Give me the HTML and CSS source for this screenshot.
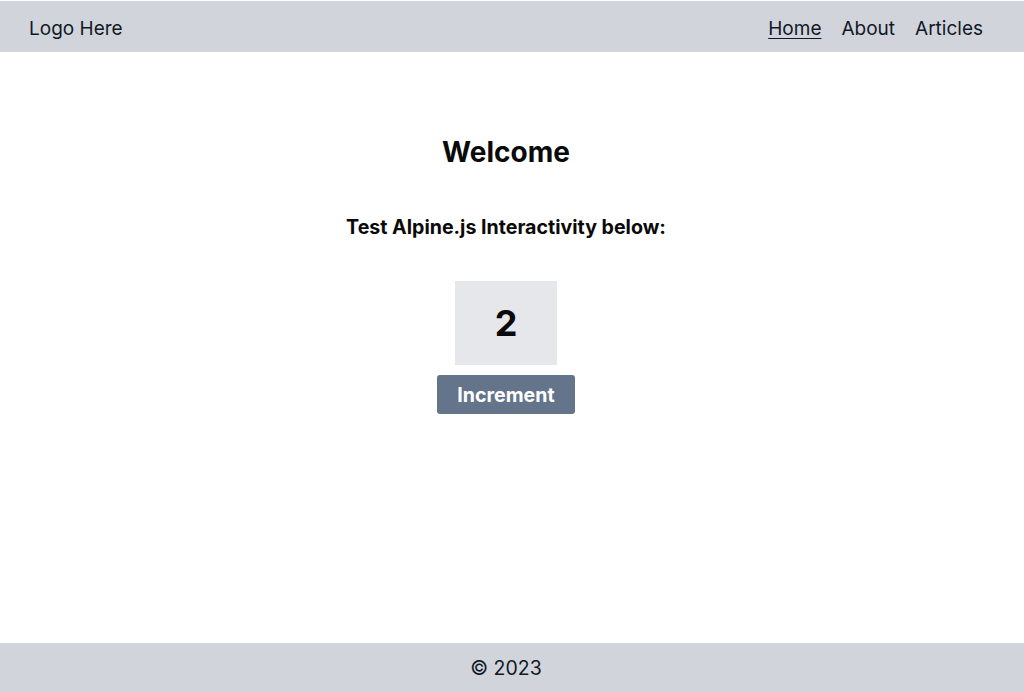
FILE: index.html
```html
<!DOCTYPE html>
<html lang="en">
<head>
  <meta charset="UTF-8" />
  <meta name="viewport" content="width=device-width, initial-scale=1.0"/>
  <title>Welcome</title>
  <link rel="stylesheet" href="styles.css">
</head>
<body>
  <header class="site-header">
    <div class="site-logo">Logo Here</div>
    <nav class="site-nav">
      <a href="#" class="nav-link active">Home</a>
      <a href="#" class="nav-link">About</a>
      <a href="#" class="nav-link">Articles</a>
    </nav>
  </header>
  <main class="site-main">
    <h1 class="page-title">Welcome</h1>
    <p class="page-sub">Test Alpine.js Interactivity below:</p>
    <div class="counter">
      <div class="counter-value" id="counter-value">2</div>
      <button class="counter-btn" id="counter-btn">Increment</button>
    </div>
  </main>
  <footer class="site-footer">© 2023</footer>
  <script>
    // tiny stand-in for the x-data counter
    let count = 2;
    const value = document.getElementById('counter-value');
    document.getElementById('counter-btn').addEventListener('click', () => {
      count++;
      value.textContent = count;
    });
  </script>
</body>
</html>
```

FILE: styles.css
```css
:root {
  --bar: #d1d5db;
  --box: #e5e7eb;
  --btn: #64748b;
  --text: #111827;
}
* { box-sizing: border-box; margin: 0; padding: 0; }
html, body { height: 100%; }
body {
  font-family: Inter, 'Noto Sans', Arial, sans-serif;
  color: var(--text);
  background: #fff;
  display: flex;
  flex-direction: column;
  min-height: 100vh;
}
.site-header {
  background: var(--bar);
  height: 51px;
  margin-top: 1px;
  padding: 3px 41px 0 29px;
  display: flex;
  align-items: center;
  justify-content: space-between;
  font-size: 19px;
}
.site-nav {
  display: flex;
  gap: 20px;
}
.nav-link {
  color: var(--text);
  text-decoration: none;
}
.nav-link.active {
  text-decoration: underline;
  text-underline-offset: 3px;
}
.site-main {
  flex: 1;
  display: flex;
  flex-direction: column;
  align-items: center;
  padding: 83px 12px 0 0;
  color: #0a0a0a;
}
.page-title {
  font-size: 28px;
  line-height: 34px;
  font-weight: 700;
  margin-bottom: 45px;
}
.page-sub {
  font-size: 19.6px;
  line-height: 24px;
  font-weight: 700;
  margin-top: 1px;
  margin-bottom: 42px;
}
.counter {
  display: flex;
  flex-direction: column;
  align-items: center;
  gap: 10px;
}
.counter-value {
  width: 102px;
  height: 84px;
  background: var(--box);
  display: flex;
  align-items: center;
  justify-content: center;
  font-size: 36px;
  font-weight: 700;
}
.counter-btn {
  width: 138px;
  height: 39px;
  background: var(--btn);
  color: #fff;
  border: none;
  border-radius: 3px;
  font-family: inherit;
  font-size: 19.6px;
  font-weight: 700;
  cursor: pointer;
}
.site-footer {
  background: var(--bar);
  height: 49px;
  padding-right: 12px;
  display: flex;
  align-items: center;
  justify-content: center;
  font-size: 19.5px;
}
```
